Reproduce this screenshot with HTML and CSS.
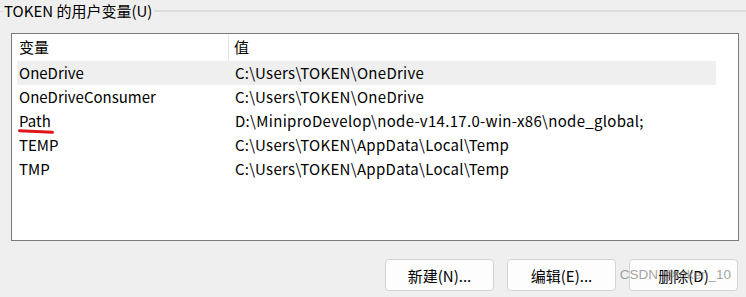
FILE: index.html
```html
<!DOCTYPE html>
<html lang="zh-CN">
<head>
    <meta charset="UTF-8">
    <title>TOKEN 的用户变量</title>
    <link rel="stylesheet" href="styles.css">
</head>
<body>
    <div class="group">
        <div class="group-title">
            <span class="group-edge"></span>
            <span class="group-text">TOKEN 的用户变量(U)</span>
            <span class="group-line"></span>
        </div>

        <div class="list">
            <div class="list-head">
                <div class="col-name">变量</div>
                <div class="col-value">值</div>
            </div>
            <div class="row selected">
                <div class="col-name">OneDrive</div>
                <div class="col-value">C:\Users\TOKEN\OneDrive</div>
            </div>
            <div class="row">
                <div class="col-name">OneDriveConsumer</div>
                <div class="col-value">C:\Users\TOKEN\OneDrive</div>
            </div>
            <div class="row">
                <div class="col-name"><span class="marked">Path</span></div>
                <div class="col-value">D:\MiniproDevelop\node-v14.17.0-win-x86\node_global;</div>
            </div>
            <div class="row">
                <div class="col-name">TEMP</div>
                <div class="col-value">C:\Users\TOKEN\AppData\Local\Temp</div>
            </div>
            <div class="row">
                <div class="col-name">TMP</div>
                <div class="col-value">C:\Users\TOKEN\AppData\Local\Temp</div>
            </div>
        </div>

        <div class="actions">
            <button>新建(N)...</button>
            <button>编辑(E)...</button>
            <button>删除(D)</button>
            <span class="watermark">CSDN @token_10</span>
        </div>
    </div>
</body>
</html>
```

FILE: styles.css
```css
body {
    margin: 0;
    background: #efefef;
    color: #000;
    font-family: "Noto Sans CJK SC", "Noto Sans", sans-serif;
    font-size: 15px;
    width: 746px;
    height: 297px;
    overflow: hidden;
}
.group-title {
    display: flex;
    align-items: center;
    height: 21px;
    margin-bottom: 12px;
}
.group-edge {
    width: 3px;
    height: 1px;
    background: #dcdcdc;
    margin-top: 1px;
}
.group-text {
    padding: 0 2px 0 1px;
    line-height: 21px;
}
.group-line {
    flex: 1;
    height: 2px;
    background: #dcdcdc;
    margin-top: 1px;
}
.list {
    margin: 0 7px 0 11px;
    height: 206px;
    background: #fff;
    border: 1px solid #7a7a7a;
    padding: 0 22px 0 5px;
}
.list-head, .row {
    display: flex;
}
.list-head {
    height: 27px;
    line-height: 25px;
}
.row {
    height: 24px;
    line-height: 24px;
}
.row.selected {
    background: #efefef;
}
.col-name {
    width: 212px;
    padding-left: 2px;
    box-sizing: border-box;
    white-space: nowrap;
}
.list-head .col-name {
    border-right: 1px solid #e5e5e5;
}
.col-value {
    flex: 1;
    padding-left: 5px;
    white-space: nowrap;
}
.row .col-value {
    padding-left: 6px;
    letter-spacing: 0.3px;
}
.marked {
    position: relative;
}
.marked::after {
    content: "";
    position: absolute;
    left: -1px;
    right: -3px;
    bottom: -2px;
    height: 3px;
    background: #e0161b;
    border-radius: 2px;
    transform: rotate(3deg);
}
.actions {
    position: relative;
    display: flex;
    justify-content: flex-end;
    gap: 13px;
    margin: 18px 8px 0 0;
}
button {
    width: 109px;
    height: 32px;
    background: #fdfdfd;
    border: 1px solid #d3d3d3;
    border-radius: 4px;
    font-family: inherit;
    font-size: 15px;
    color: #000;
    padding: 0;
}
.watermark {
    position: absolute;
    right: 7px;
    top: 8px;
    font-family: "Liberation Sans", Arial, sans-serif;
    font-size: 13.5px;
    color: rgba(120, 120, 120, 0.7);
    pointer-events: none;
}
```
